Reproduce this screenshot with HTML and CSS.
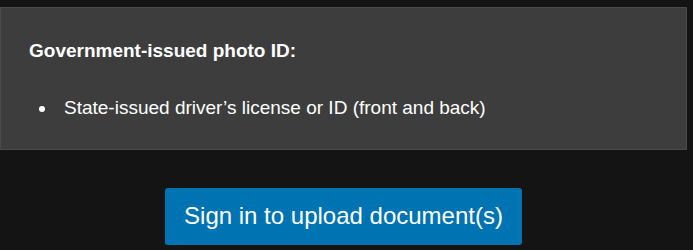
FILE: index.html
```html
<!DOCTYPE html>
<html>
<head>
<meta charset="utf-8">
<link rel="stylesheet" href="styles.css">
</head>
<body>
<div class="page">
  <section class="card">
    <h2 class="card-title">Government-issued photo ID:</h2>
    <ul class="card-list">
      <li class="card-item">State-issued driver’s license or ID (front and back)</li>
    </ul>
  </section>
  <div class="actions">
    <button class="btn">Sign in to upload document(s)</button>
  </div>
</div>
</body>
</html>
```
FILE: styles.css
```css
html, body {
  margin: 0;
  padding: 0;
  background: #141414;
  height: 100%;
  overflow: hidden;
}
.page {
  width: 687px;
  padding-top: 7px;
  font-family: "Liberation Sans", Arial, sans-serif;
  color: #fff;
}
.card {
  background: #3d3d3d;
  border: 1px solid #4b4b4b;
  height: 141px;
  box-sizing: content-box;
  padding: 0 28px;
}
.card-title {
  margin: 0;
  padding-top: 31px;
  font-size: 19px;
  font-weight: bold;
  line-height: 24px;
}
.card-list {
  list-style: none;
  margin: 33px 0 0;
  padding: 0 0 0 10px;
  font-size: 19px;
  line-height: 24px;
}
.card-item {
  display: flex;
  align-items: center;
}
.card-item::before {
  content: "";
  width: 6px;
  height: 6px;
  border-radius: 50%;
  background: #fff;
  margin-right: 19px;
  margin-top: 2px;
  flex: none;
}
.actions {
  display: flex;
  justify-content: center;
  padding-top: 38px;
}
.btn {
  width: 357px;
  height: 57px;
  background: #0074b2;
  color: #fff;
  border: none;
  border-radius: 3px;
  font-family: "Liberation Sans", Arial, sans-serif;
  font-size: 24px;
  padding: 0 0 1px;
}
```
